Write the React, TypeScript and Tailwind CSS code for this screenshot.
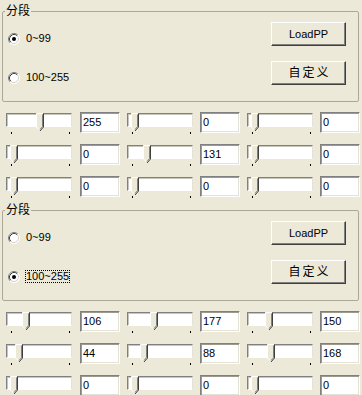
import React from 'react';

type SectionData = {
  checked: 0 | 1;
  focus: boolean;
  values: number[][];
  thumbs: number[][];
};

const SECTIONS: SectionData[] = [
  {
    checked: 0,
    focus: false,
    values: [
      [255, 0, 0],
      [0, 131, 0],
      [0, 0, 0],
    ],
    thumbs: [
      [30, 4, 4],
      [4, 16, 4],
      [4, 4, 4],
    ],
  },
  {
    checked: 1,
    focus: true,
    values: [
      [106, 177, 150],
      [44, 88, 168],
      [0, 0, 0],
    ],
    thumbs: [
      [16, 23, 18],
      [9, 13, 20],
      [4, 4, 4],
    ],
  },
];

export default function App() {
  return (
    <div className="w-[362px] h-[395px] overflow-hidden bg-[#ece9d8] text-black font-['Liberation_Sans','Noto_Sans_CJK_SC',sans-serif]">
      {SECTIONS.map((s, i) => (
        <Section key={i} data={s} />
      ))}
    </div>
  );
}

function Section({ data }: { data: SectionData }) {
  return (
    <div className="h-[195px]">
      {/* Group box */}
      <fieldset className="mt-[4px] ml-[2px] w-[357px] h-[98px] border border-[#aca899] rounded-[2px]">
        <legend className="ml-[2px] px-[1px] text-[12px] leading-[14px]">分段</legend>
        <div className="flex justify-between">
          <div className="pl-[5px] flex flex-col">
            <RadioRow label="0~99" checked={data.checked === 0} focus={false} className="mt-[14px]" />
            <RadioRow
              label="100~255"
              checked={data.checked === 1}
              focus={data.focus}
              className="mt-[26px]"
            />
          </div>
          <div className="pt-[4px] pr-[12px] flex flex-col gap-[15px]">
            <Button>LoadPP</Button>
            <Button>
              <span className="text-[12px] tracking-[2px] pl-[2px]">自定义</span>
            </Button>
          </div>
        </div>
      </fieldset>

      {/* Slider rows */}
      <div className="mt-[10px] flex flex-col gap-[11px]">
        {data.values.map((row, r) => (
          <div key={r} className="h-[21px] pl-[6px] flex items-start gap-[7px]">
            {row.map((v, c) => (
              <React.Fragment key={c}>
                <Slider offset={data.thumbs[r][c]} />
                <Edit value={v} first={c === 0} />
              </React.Fragment>
            ))}
          </div>
        ))}
      </div>
    </div>
  );
}

function RadioRow({
  label,
  checked,
  focus,
  className,
}: {
  label: string;
  checked: boolean;
  focus: boolean;
  className?: string;
}) {
  return (
    <div className={`h-[13px] flex items-center ${className ?? ''}`}>
      <Radio checked={checked} />
      <span
        className={`ml-[5px] text-[11px] leading-[11px] border border-dotted ${
          focus ? 'border-black' : 'border-transparent'
        }`}
      >
        {label}
      </span>
    </div>
  );
}

function Radio({ checked }: { checked: boolean }) {
  return (
    <svg width="12" height="12" viewBox="0 0 12 12">
      <circle cx="6" cy="6" r="5.5" fill="#fff" />
      <path d="M2.11 9.89 A5.5 5.5 0 0 1 9.89 2.11" fill="none" stroke="#808080" />
      <path d="M2.82 9.18 A4.5 4.5 0 0 1 9.18 2.82" fill="none" stroke="#404040" />
      <path d="M9.89 2.11 A5.5 5.5 0 0 1 2.11 9.89" fill="none" stroke="#ffffff" />
      <path d="M9.18 2.82 A4.5 4.5 0 0 1 2.82 9.18" fill="none" stroke="#d4d0c8" />
      {checked && <circle cx="6" cy="6" r="2" fill="#000" />}
    </svg>
  );
}

function Button({ children }: { children: React.ReactNode }) {
  return (
    <button className="w-[75px] h-[24px] flex items-center justify-center bg-[#ece9d8] text-[11px] border border-t-white border-l-white border-r-[#404040] border-b-[#404040] shadow-[inset_-1px_-1px_0_#808080]">
      {children}
    </button>
  );
}

function Slider({ offset }: { offset: number }) {
  return (
    <div className="relative w-[66px] mt-[1px]">
      <div className="h-[14px] bg-white border border-t-[#808080] border-l-[#808080] border-r-[#e4e2d6] border-b-white shadow-[inset_1px_1px_0_#c8c6bc]" />
      <div className="mt-[5px] pl-[5px] pr-[2px] flex justify-between">
        <div className="w-px h-[2px] bg-black" />
        <div className="w-px h-[2px] bg-black" />
      </div>
      {/* thumb */}
      <div className="absolute top-0" style={{ left: offset }}>
        <Thumb />
      </div>
    </div>
  );
}

function Thumb() {
  return (
    <svg width="8" height="19" viewBox="0 0 8 19">
      <path d="M0.5 0.5 H7.5 V14 L4 18 L0.5 14 Z" fill="#ece9d8" />
      <path d="M0.5 14 V0.5 H7" fill="none" stroke="#fff" />
      <path d="M0.5 14 L4 17.5" fill="none" stroke="#fff" />
      <path d="M7.5 0.5 V14 L4 18" fill="none" stroke="#404040" />
      <path d="M6.5 1.5 V13.6 L4 16.5" fill="none" stroke="#808080" />
    </svg>
  );
}

function Edit({ value, first }: { value: number; first: boolean }) {
  return (
    <div
      className={`w-[40px] h-[21px] flex items-center pl-[2px] bg-white text-[11px] border border-t-[#808080] border-l-[#808080] border-r-white border-b-white shadow-[inset_1px_1px_0_#9c9a90,inset_-1px_-1px_0_#e4e2d6] ${
        first ? 'ml-[1px]' : ''
      }`}
    >
      {value}
    </div>
  );
}
